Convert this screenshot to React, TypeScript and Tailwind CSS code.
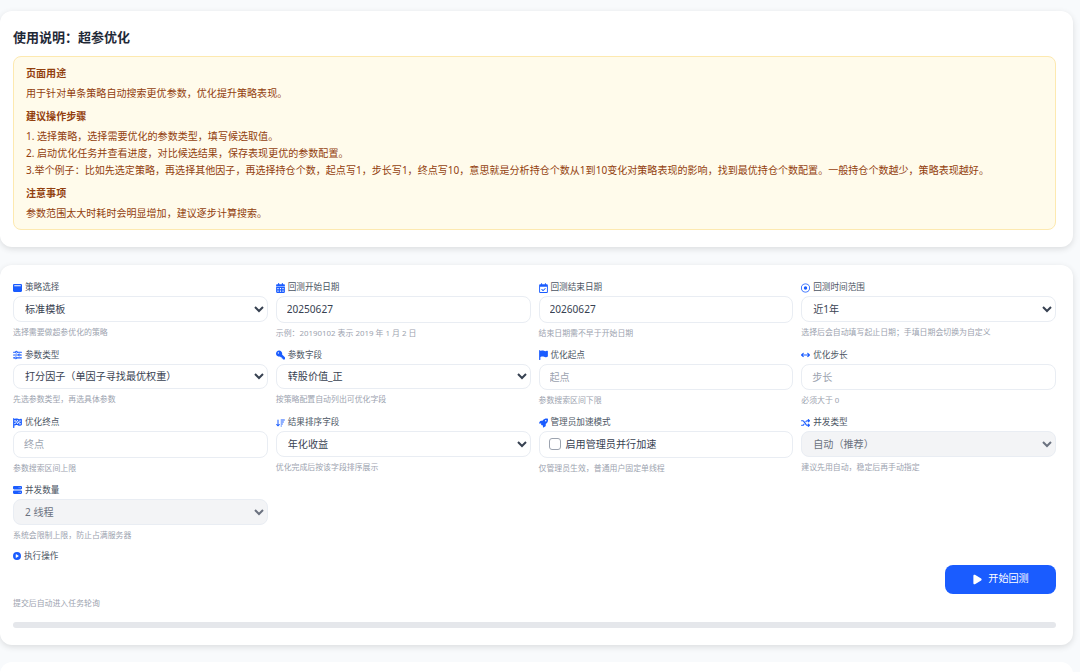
import type { ReactNode } from "react";
import {
  FaArrowDownWideShort,
  FaArrowsLeftRight,
  FaCalendarDays,
  FaCirclePlay,
  FaFlag,
  FaFlagCheckered,
  FaKey,
  FaPlay,
  FaRegCalendarCheck,
  FaRegCircleDot,
  FaRocket,
  FaServer,
  FaShuffle,
  FaSliders,
  FaWindowMaximize,
} from "react-icons/fa6";

interface FieldProps {
  icon: ReactNode;
  label: string;
  hint: string;
  children: ReactNode;
}

const selectClass =
  "block w-full h-[25.5px] rounded-lg border border-[#e9edf3] bg-white pl-[7px] pr-0 text-[10.1px] text-[#374151] outline-none";
const inputClass =
  "block w-full h-[26.5px] rounded-lg border border-[#e9edf3] bg-white px-[10px] text-[10.1px] text-[#374151] outline-none placeholder:text-[#9ca3af]";
const disabledSelectClass =
  "block w-full h-[25.5px] rounded-lg border border-[#e9edf3] bg-[#f3f4f6] pl-[7px] pr-0 text-[10.1px] text-[#6b7280] outline-none";

const Field = ({ icon, label, hint, children }: FieldProps) => (
  <div className="min-w-0">
    <div className="mb-[3px] flex h-3 items-center gap-[3px] pt-px text-[8.6px] text-[#4b5563]">
      <span className="flex w-[9px] justify-center text-[10px] text-[#1a5cff]">{icon}</span>
      {label}
    </div>
    {children}
    <div className="mt-[5px] h-[11px] text-[7.9px] leading-[11px] text-[#9ca3af]">{hint}</div>
  </div>
);

const App = () => {
  return (
    <div className="h-[672px] overflow-hidden bg-[#f8fafc] pr-[7px] pt-[11px] font-['Noto_Sans','Noto_Sans_CJK_SC',sans-serif]">
      <section className="rounded-xl bg-white pb-[17px] pl-[13px] pr-[17px] pt-[17px] shadow-[0_2px_6px_rgba(0,0,0,0.12)]">
        <h2 className="mb-[10px] text-[13px] font-bold leading-[18px] text-[#1f2937]">使用说明：超参优化</h2>
        <div className="rounded-lg border border-[#fde9b0] bg-[#fffbeb] px-3 pb-[7px] pt-2 text-[10.05px] leading-[17px] text-[#92400e]">
          <div className="mb-[3px] font-bold">页面用途</div>
          <div>用于针对单条策略自动搜索更优参数，优化提升策略表现。</div>
          <div className="mb-[3px] mt-[6px] font-bold">建议操作步骤</div>
          <div>1. 选择策略，选择需要优化的参数类型，填写候选取值。</div>
          <div>2. 启动优化任务并查看进度，对比候选结果，保存表现更优的参数配置。</div>
          <div>
            3.举个例子：比如先选定策略，再选择其他因子，再选择持仓个数，起点写1，步长写1，终点写10，意思就是分析持仓个数从1到10变化对策略表现的影响，找到最优持仓个数配置。一般持仓个数越少，策略表现越好。
          </div>
          <div className="mb-[3px] mt-[6px] font-bold">注意事项</div>
          <div>参数范围太大时耗时会明显增加，建议逐步计算搜索。</div>
        </div>
      </section>

      <section className="mt-[18px] rounded-xl bg-white pb-[17.5px] pl-[13px] pr-[17px] pt-4 shadow-[0_2px_6px_rgba(0,0,0,0.12)]">
        <div className="grid grid-cols-4 items-start gap-x-2 gap-y-[10px]">
          <Field icon={<FaWindowMaximize />} label="策略选择" hint="选择需要做超参优化的策略">
            <select className={selectClass} defaultValue="标准模板">
              <option>标准模板</option>
            </select>
          </Field>
          <Field icon={<FaCalendarDays />} label="回测开始日期" hint="示例：20190102 表示 2019 年 1 月 2 日">
            <input className={inputClass} defaultValue="20250627" />
          </Field>
          <Field icon={<FaRegCalendarCheck />} label="回测结束日期" hint="结束日期需不早于开始日期">
            <input className={inputClass} defaultValue="20260627" />
          </Field>
          <Field icon={<FaRegCircleDot />} label="回测时间范围" hint="选择后会自动填写起止日期；手填日期会切换为自定义">
            <select className={selectClass} defaultValue="近1年">
              <option>近1年</option>
            </select>
          </Field>

          <Field icon={<FaSliders />} label="参数类型" hint="先选参数类型，再选具体参数">
            <select className={selectClass}>
              <option>打分因子（单因子寻找最优权重）</option>
            </select>
          </Field>
          <Field icon={<FaKey className="-scale-x-100" />} label="参数字段" hint="按策略配置自动列出可优化字段">
            <select className={selectClass}>
              <option>转股价值_正</option>
            </select>
          </Field>
          <Field icon={<FaFlag />} label="优化起点" hint="参数搜索区间下限">
            <input className={inputClass} placeholder="起点" />
          </Field>
          <Field icon={<FaArrowsLeftRight />} label="优化步长" hint="必须大于 0">
            <input className={inputClass} placeholder="步长" />
          </Field>

          <Field icon={<FaFlagCheckered />} label="优化终点" hint="参数搜索区间上限">
            <input className={inputClass} placeholder="终点" />
          </Field>
          <Field icon={<FaArrowDownWideShort />} label="结果排序字段" hint="优化完成后按该字段排序展示">
            <select className={selectClass}>
              <option>年化收益</option>
            </select>
          </Field>
          <Field icon={<FaRocket />} label="管理员加速模式" hint="仅管理员生效，普通用户固定单线程">
            <label className="flex h-[26.5px] items-center gap-[5px] rounded-lg border border-[#e9edf3] bg-white pl-[9px] text-[10.1px] text-[#374151]">
              <input type="checkbox" className="size-3 appearance-none rounded-[3px] border border-[#9ca3af] bg-white" />
              启用管理员并行加速
            </label>
          </Field>
          <Field icon={<FaShuffle />} label="并发类型" hint="建议先用自动，稳定后再手动指定">
            <select className={disabledSelectClass} disabled>
              <option>自动（推荐）</option>
            </select>
          </Field>

          <Field icon={<FaServer />} label="并发数量" hint="系统会限制上限，防止占满服务器">
            <select className={disabledSelectClass + " !h-[26.5px]"} disabled>
              <option>2 线程</option>
            </select>
          </Field>
        </div>

        <div className="mt-[9px]">
          <div className="flex h-3 items-center gap-[3px] text-[8.6px] text-[#4b5563]">
            <FaCirclePlay className="text-[8px] text-[#1a5cff]" />
            执行操作
          </div>
          <div className="mt-[2.5px] flex justify-end">
            <button className="flex h-[29px] w-[111px] items-center justify-center gap-[5px] rounded-lg bg-[#1a5cff] text-[10.1px] text-white">
              <FaPlay className="text-[11px]" />
              开始回测
            </button>
          </div>
          <div className="mt-[4.5px] h-[11px] text-[7.9px] leading-[11px] text-[#9ca3af]">提交后自动进入任务轮询</div>
        </div>
        <div className="mt-[13px] h-[5.5px] rounded-full bg-[#e5e7eb]" />
      </section>

      <section className="mt-[17px] h-10 rounded-xl bg-white" />
    </div>
  );
};

export default App;
